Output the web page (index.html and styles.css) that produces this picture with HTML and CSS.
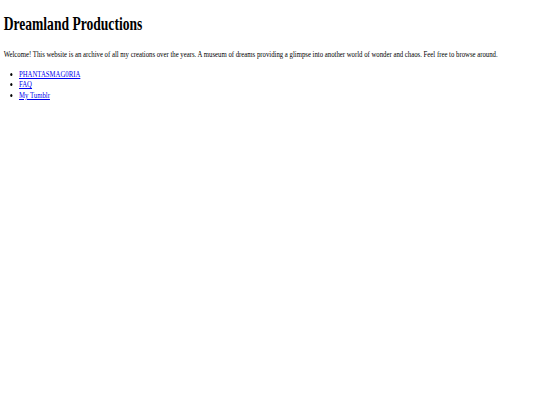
FILE: index.html
```html
<!DOCTYPE html>
<html>
<head>
<meta charset="utf-8">
<title>Dreamland Productions</title>
<link rel="stylesheet" href="styles.css">
</head>
<body>
<div class="frame">
  <div class="page">
    <h1 class="title">Dreamland Productions</h1>
    <p class="intro">Welcome! This website is an archive of all my creations over the years. A museum of dreams providing a glimpse into another world of wonder and chaos. Feel free to browse around.</p>
    <ul class="links">
      <li><a href="#">PHANTASMAG0RIA</a></li>
      <li><a href="#">FAQ</a></li>
      <li><a href="#">My Tumblr</a></li>
    </ul>
  </div>
</div>
</body>
</html>
```

FILE: styles.css
```css
html, body {
  margin: 0;
  background: #ffffff;
  overflow: hidden;
}
body {
  padding: 0;
}
.frame {
  width: 540px;
  overflow: hidden;
}
.page {
  box-sizing: border-box;
  font-family: "Liberation Serif", "Times New Roman", serif;
  color: #000;
  padding: 4px 5px;
  transform: scaleX(0.73);
  transform-origin: 0 0;
  width: 739px;
}
.title {
  font-size: 18.6px;
  font-weight: bold;
  line-height: 22px;
  margin: 9px 0 14px;
}
.intro {
  font-size: 9.25px;
  line-height: 10.5px;
  margin: 0 0 9px;
}
.links {
  font-size: 9.25px;
  line-height: 10.5px;
  margin: 0;
  padding-left: 21px;
}
.links li {
  line-height: 10.6px;
}
.links a {
  color: #0000ee;
}
```
